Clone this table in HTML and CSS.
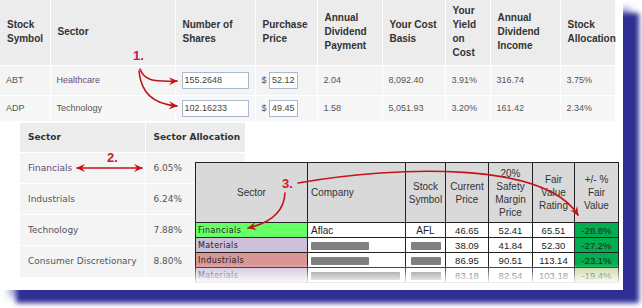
FILE: index.html
```html
<!DOCTYPE html>
<html lang="en">
<head>
<meta charset="utf-8">
<title>Dividend portfolio</title>
<link rel="stylesheet" href="styles.css">
</head>
<body>
<div class="card">
  <table class="portfolio">
    <colgroup>
      <col class="w50"><col class="w125"><col class="w80"><col class="w62"><col class="w65"><col class="w63"><col class="w45"><col class="w70"><col class="w55">
    </colgroup>
    <thead>
      <tr>
        <th>Stock<br>Symbol</th>
        <th>Sector</th>
        <th>Number of<br>Shares</th>
        <th>Purchase<br>Price</th>
        <th>Annual<br>Dividend<br>Payment</th>
        <th>Your Cost<br>Basis</th>
        <th>Your<br>Yield<br>on<br>Cost</th>
        <th>Annual<br>Dividend<br>Income</th>
        <th>Stock<br>Allocation</th>
      </tr>
    </thead>
    <tbody>
      <tr class="r1">
        <td>ABT</td>
        <td class="link">Healthcare</td>
        <td><input class="shares" type="text" value="155.2648" readonly></td>
        <td>$ <input class="price" type="text" value="52.12" readonly></td>
        <td>2.04</td>
        <td>8,092.40</td>
        <td>3.91%</td>
        <td>316.74</td>
        <td>3.75%</td>
      </tr>
      <tr class="r2">
        <td>ADP</td>
        <td>Technology</td>
        <td><input class="shares" type="text" value="102.16233" readonly></td>
        <td>$ <input class="price" type="text" value="49.45" readonly></td>
        <td>1.58</td>
        <td>5,051.93</td>
        <td>3.20%</td>
        <td>161.42</td>
        <td>2.34%</td>
      </tr>
    </tbody>
  </table>

  <table class="alloc">
    <colgroup><col class="w125"><col class="w100"></colgroup>
    <thead>
      <tr><th>Sector</th><th>Sector Allocation</th></tr>
    </thead>
    <tbody>
      <tr><td class="link">Financials</td><td>6.05%</td></tr>
      <tr><td>Industrials</td><td>6.24%</td></tr>
      <tr><td>Technology</td><td>7.88%</td></tr>
      <tr><td>Consumer Discretionary</td><td>8.80%</td></tr>
    </tbody>
  </table>

  <div class="excel">
    <table class="xl">
      <colgroup>
        <col class="w112"><col class="w98"><col class="w40"><col class="w43"><col class="w44"><col class="w42"><col class="w44">
      </colgroup>
      <thead>
        <tr>
          <th>Sector</th>
          <th class="left">Company</th>
          <th>Stock<br>Symbol</th>
          <th>Current<br>Price</th>
          <th>20%<br>Safety<br>Margin<br>Price</th>
          <th>Fair<br>Value<br>Rating</th>
          <th>+/- %<br>Fair<br>Value</th>
        </tr>
      </thead>
      <tbody>
        <tr>
          <td class="sec fin">Financials</td>
          <td class="left">Aflac</td>
          <td class="sym">AFL</td>
          <td>46.65</td><td>52.41</td><td>65.51</td>
          <td class="fv strong">-28.8%</td>
        </tr>
        <tr>
          <td class="sec mat">Materials</td>
          <td class="left"><span class="bar b58"></span></td>
          <td><span class="bar b30"></span></td>
          <td>38.09</td><td>41.84</td><td>52.30</td>
          <td class="fv strong">-27.2%</td>
        </tr>
        <tr>
          <td class="sec ind">Industrials</td>
          <td class="left"><span class="bar b58"></span></td>
          <td><span class="bar b30"></span></td>
          <td>86.95</td><td>90.51</td><td>113.14</td>
          <td class="fv strong">-23.1%</td>
        </tr>
        <tr>
          <td class="sec mat">Materials</td>
          <td class="left"><span class="bar b89"></span></td>
          <td><span class="bar b30"></span></td>
          <td>83.18</td><td>82.54</td><td>103.18</td>
          <td class="fv light">-19.4%</td>
        </tr>
      </tbody>
    </table>
  </div>

  <svg class="marks" width="623" height="290" viewBox="0 0 623 290">
    <defs>
      <marker id="head" viewBox="0 0 10 10" refX="9" refY="5" markerUnits="userSpaceOnUse" markerWidth="9" markerHeight="9" orient="auto-start-reverse">
        <path d="M0,0.5 L10,5 L0,9.5 L3.5,5 Z" fill="#c5121b"/>
      </marker>
    </defs>
    <g fill="none" stroke="#c5121b" stroke-width="1.6" stroke-linecap="round">
      <path d="M140,69 C144,80 152,82 177,81" marker-end="url(#head)"/>
      <path d="M139,71 C141,92 152,104 177,106" marker-end="url(#head)"/>
      <path d="M77,168 L142,168" marker-start="url(#head)" marker-end="url(#head)"/>
      <path d="M298,183 C400,165 545,162 578,215" marker-end="url(#head)"/>
      <path d="M285,193 C284,212 270,223 248,228" marker-end="url(#head)"/>
    </g>
    <text class="lbl one" x="133" y="60">1.</text>
    <text class="lbl" x="107" y="162">2.</text>
    <text class="lbl" x="282" y="188">3.</text>
  </svg>
</div>
</body>
</html>
```

FILE: styles.css
```css
* {
  box-sizing: border-box;
}

html, body {
  margin: 0;
  padding: 0;
  background: #ffffff;
}

body {
  width: 642px;
  height: 308px;
  overflow: hidden;
}

.card {
  position: relative;
  width: 623px;
  height: 290px;
  background: #ffffff;
  box-shadow: 16px 13px 5px #2e2e94, 8px 7px 6px rgba(110, 110, 200, 0.5);
}

/* column widths */
.w40 { width: 40px; }
.w42 { width: 42px; }
.w43 { width: 43px; }
.w44 { width: 44px; }
.w45 { width: 45px; }
.w50 { width: 50px; }
.w55 { width: 55px; }
.w62 { width: 62px; }
.w63 { width: 63px; }
.w65 { width: 65px; }
.w70 { width: 70px; }
.w80 { width: 80px; }
.w98 { width: 98px; }
.w100 { width: 100px; }
.w112 { width: 112px; }
.w125 { width: 125px; }

/* top portfolio table */
.portfolio {
  border-collapse: collapse;
  table-layout: fixed;
  width: 615px;
  font-family: "Liberation Sans", Arial, sans-serif;
}

.portfolio th {
  height: 65px;
  padding: 0 0 0 7px;
  background: #ececec;
  color: #333333;
  font-size: 10px;
  font-weight: bold;
  line-height: 14px;
  text-align: left;
  vertical-align: middle;
  white-space: nowrap;
  border-right: 1px solid #ffffff;
  border-bottom: 1px solid #ffffff;
}

.portfolio td {
  padding: 0 0 0 6px;
  background: #f4f4f4;
  color: #555555;
  font-size: 9px;
  white-space: nowrap;
  border-right: 1px solid #ffffff;
  border-bottom: 1px solid #ffffff;
}

.portfolio .r1 td {
  height: 30px;
}

.portfolio .r2 td {
  height: 26px;
  background: #f7f7f7;
}

.portfolio .link {
  color: #6a4a7c;
}

.portfolio input {
  height: 17px;
  margin: 0;
  padding: 0 2px;
  border: 1px solid #a9b8cc;
  background: #ffffff;
  color: #444444;
  font-family: "Liberation Sans", Arial, sans-serif;
  font-size: 9px;
  vertical-align: middle;
}

.portfolio .shares {
  width: 67px;
}

.portfolio .price {
  width: 29px;
}

/* sector allocation table */
.alloc {
  margin: 1px 0 0 20px;
  border-collapse: collapse;
  table-layout: fixed;
  width: 225px;
  font-family: "DejaVu Sans", Verdana, sans-serif;
  font-size: 9px;
  color: #555555;
}

.alloc th {
  height: 30px;
  padding: 0 0 0 8px;
  background: #ececec;
  color: #333333;
  font-weight: bold;
  text-align: left;
  border-right: 1px solid #ffffff;
}

.alloc td {
  height: 31px;
  padding: 0 0 0 8px;
  background: #f4f4f4;
  white-space: nowrap;
  border-top: 1px solid #ffffff;
  border-right: 1px solid #ffffff;
}

.alloc .link {
  color: #5e4b6c;
}

/* pasted spreadsheet */
.excel {
  position: absolute;
  left: 195px;
  top: 162px;
  width: 424px;
  height: 126px;
  overflow: hidden;
  background: #ffffff;
}

.excel::after {
  content: "";
  position: absolute;
  left: 0;
  right: 0;
  bottom: 0;
  height: 24px;
  background: linear-gradient(rgba(255, 255, 255, 0), #ffffff 85%);
}

.xl {
  border-collapse: collapse;
  table-layout: fixed;
  width: 424px;
  font-family: "Liberation Sans", Arial, sans-serif;
}

.xl th,
.xl td {
  border: 1px solid #222222;
}

.xl th {
  height: 60px;
  padding: 0;
  background: #d9d9d9;
  color: #333333;
  font-size: 10px;
  font-weight: normal;
  line-height: 13px;
  text-align: center;
  vertical-align: middle;
}

.xl td {
  height: 15px;
  padding: 0;
  background: #ffffff;
  color: #222222;
  font-size: 9.5px;
  line-height: 13px;
  text-align: center;
  white-space: nowrap;
}

.xl .left {
  text-align: left;
  padding-left: 3px;
}

.xl td.left,
.xl td.sym {
  font-size: 10px;
}

.xl .sec {
  text-align: left;
  padding-left: 2px;
  font-family: "DejaVu Sans", Verdana, sans-serif;
  font-size: 8px;
  letter-spacing: 0.4px;
}

.xl .fin { background: #66ff66; }
.xl .mat { background: #ccc0da; }
.xl .ind { background: #da9694; }
.xl .strong { background: #00b050; }
.xl .light { background: #c4d79b; }

.bar {
  display: inline-block;
  height: 8px;
  background: #808080;
  border-radius: 1px;
  vertical-align: middle;
}

.b30 { width: 30px; }
.b58 { width: 58px; }
.b89 { width: 89px; }

/* annotation overlay */
.marks {
  position: absolute;
  left: 0;
  top: 0;
  overflow: visible;
  pointer-events: none;
}

.lbl {
  font-family: "Liberation Sans", Arial, sans-serif;
  font-size: 13px;
  font-weight: bold;
  fill: #cc2024;
}

.lbl.one {
  fill: #d01656;
}
```
